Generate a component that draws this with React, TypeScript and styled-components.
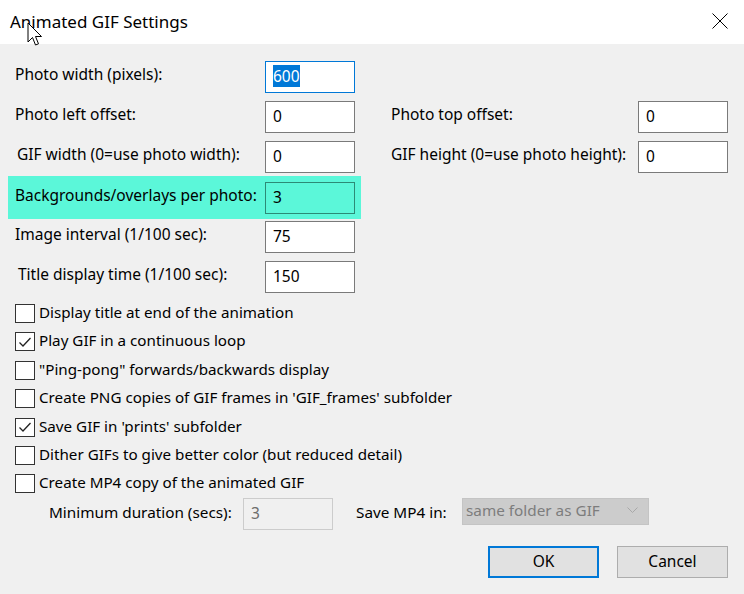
import React from 'react'
import styled, { createGlobalStyle, css } from 'styled-components'

const GlobalStyle = createGlobalStyle`
  html, body {
    margin: 0;
    padding: 0;
    background: #f0f0f0;
  }
  body {
    font-family: 'Noto Sans', 'Open Sans', sans-serif;
    color: #000;
  }
`

const Dialog = styled.div`
  position: relative;
  width: 744px;
  height: 594px;
  display: flex;
  flex-direction: column;
  background: #f0f0f0;
  overflow: hidden;
`

const TitleBar = styled.div`
  height: 44px;
  flex: none;
  background: #fff;
  display: flex;
  align-items: center;
  justify-content: space-between;
  padding: 0 16px 2px 10px;
  box-sizing: border-box;
`

const Title = styled.div`
  font-size: 17px;
`

const CloseBtn = styled.div`
  width: 16px;
  height: 16px;
  display: flex;
`

const Body = styled.div`
  flex: 1;
  display: flex;
  flex-direction: column;
  padding: 13px 16px 0 15px;
`

const FieldRow = styled.div`
  height: 40px;
  display: flex;
  align-items: center;
  gap: 36px;
`

const Pair = styled.div<{ $hl?: boolean }>`
  display: flex;
  align-items: center;
  ${p =>
    p.$hl &&
    css`
      height: 43px;
      margin: 1px -6px 0 -7px;
      padding: 0 6px 0 7px;
      background: #5bf7d9;
    `}
`

const Label = styled.div<{ $w: number; $indent?: number }>`
  width: ${p => p.$w}px;
  padding-left: ${p => p.$indent || 0}px;
  padding-bottom: 6px;
  box-sizing: border-box;
  font-size: 15.5px;
  white-space: nowrap;
`

const TextBox = styled.div<{ $focus?: boolean; $hl?: boolean; $disabled?: boolean }>`
  width: 90px;
  height: 32px;
  box-sizing: border-box;
  border: 1px solid #7a7a7a;
  background: #fff;
  padding: 3px 0 0 7px;
  font-size: 15.5px;
  ${p =>
    p.$focus &&
    css`
      border-color: #0078d7;
    `}
  ${p =>
    p.$hl &&
    css`
      border-color: #2c8a76;
      background: #5bf7d9;
    `}
  ${p =>
    p.$disabled &&
    css`
      border-color: #cccccc;
      background: #f0f0f0;
      color: #6d6d6d;
    `}
`

const Selected = styled.span`
  background: #0078d7;
  color: #fff;
`

const CheckList = styled.div`
  margin-top: 7px;
  display: flex;
  flex-direction: column;
`

const CheckRow = styled.div`
  height: 28.4px;
  display: flex;
  align-items: flex-start;
  gap: 4px;
  font-size: 15.2px;
`

const Box = styled.div`
  width: 20px;
  height: 19px;
  box-sizing: border-box;
  border: 1px solid #333;
  background: #fff;
  display: flex;
  align-items: center;
  justify-content: center;
`

const CheckText = styled.span`
  line-height: 19px;
  margin-top: -1px;
`

const SubRow = styled.div`
  margin-top: -5px;
  padding-left: 34px;
  display: flex;
  align-items: center;
  height: 32px;
  font-size: 15.3px;
`

const SubLabel = styled.span<{ $w: number; $gap?: number }>`
  width: ${p => p.$w}px;
  margin-left: ${p => p.$gap || 0}px;
  padding-bottom: 4px;
`

const Select = styled.div`
  width: 187px;
  height: 27px;
  box-sizing: border-box;
  margin-top: -5px;
  background: #cccccc;
  border: 1px solid #c4c4c4;
  color: #7d7d7d;
  display: flex;
  align-items: center;
  justify-content: space-between;
  padding: 0 10px 2px 3px;
  font-size: 15.3px;
`

const Buttons = styled.div`
  margin-top: 16px;
  display: flex;
  justify-content: flex-end;
  gap: 18px;
`

const Button = styled.div<{ $default?: boolean }>`
  width: 111px;
  height: 32px;
  box-sizing: border-box;
  background: #e1e1e1;
  border: 1px solid #adadad;
  display: flex;
  align-items: center;
  justify-content: center;
  font-size: 15.5px;
  padding-bottom: 2px;
  ${p =>
    p.$default &&
    css`
      border: 2px solid #0078d7;
    `}
`

const Cursor = styled.svg`
  position: absolute;
  left: 27px;
  top: 22px;
`

const checks = [
  { text: 'Display title at end of the animation', on: false },
  { text: 'Play GIF in a continuous loop', on: true },
  { text: '"Ping-pong" forwards/backwards display', on: false },
  { text: "Create PNG copies of GIF frames in 'GIF_frames' subfolder", on: false },
  { text: "Save GIF in 'prints' subfolder", on: true },
  { text: 'Dither GIFs to give better color (but reduced detail)', on: false },
  { text: 'Create MP4 copy of the animated GIF', on: false },
]

const Tick = () => (
  <svg width="14" height="12" viewBox="0 0 14 12">
    <path d="M1.5 6.5 L5 10 L12.5 2" fill="none" stroke="#222" strokeWidth="1.3" />
  </svg>
)

const App = () => {
  return (
    <Dialog>
      <GlobalStyle />
      <TitleBar>
        <Title>Animated GIF Settings</Title>
        <CloseBtn>
          <svg width="16" height="16" viewBox="0 0 16 16">
            <path d="M0.5 0.5 L15.5 15.5 M15.5 0.5 L0.5 15.5" stroke="#000" strokeWidth="1" />
          </svg>
        </CloseBtn>
      </TitleBar>
      <Body>
        <FieldRow>
          <Pair>
            <Label $w={250}>Photo width (pixels):</Label>
            <TextBox $focus>
              <Selected>600</Selected>
            </TextBox>
          </Pair>
        </FieldRow>
        <FieldRow>
          <Pair>
            <Label $w={250}>Photo left offset:</Label>
            <TextBox>0</TextBox>
          </Pair>
          <Pair>
            <Label $w={247}>Photo top offset:</Label>
            <TextBox>0</TextBox>
          </Pair>
        </FieldRow>
        <FieldRow>
          <Pair>
            <Label $w={250} $indent={2}>GIF width (0=use photo width):</Label>
            <TextBox>0</TextBox>
          </Pair>
          <Pair>
            <Label $w={247}>GIF height (0=use photo height):</Label>
            <TextBox>0</TextBox>
          </Pair>
        </FieldRow>
        <FieldRow>
          <Pair $hl>
            <Label $w={250}>Backgrounds/overlays per photo:</Label>
            <TextBox $hl>3</TextBox>
          </Pair>
        </FieldRow>
        <FieldRow>
          <Pair>
            <Label $w={250}>Image interval (1/100 sec):</Label>
            <TextBox>75</TextBox>
          </Pair>
        </FieldRow>
        <FieldRow>
          <Pair>
            <Label $w={250} $indent={3}>Title display time (1/100 sec):</Label>
            <TextBox>150</TextBox>
          </Pair>
        </FieldRow>

        <CheckList>
          {checks.map(c => (
            <CheckRow key={c.text}>
              <Box>{c.on && <Tick />}</Box>
              <CheckText>{c.text}</CheckText>
            </CheckRow>
          ))}
        </CheckList>

        <SubRow>
          <SubLabel $w={194}>Minimum duration (secs):</SubLabel>
          <TextBox $disabled>3</TextBox>
          <SubLabel $w={106} $gap={23}>
            Save MP4 in:
          </SubLabel>
          <Select>
            <span>same folder as GIF</span>
            <svg width="11" height="6" viewBox="0 0 11 6">
              <path d="M0.5 0.5 L5.5 5.5 L10.5 0.5" fill="none" stroke="#a8a8a8" strokeWidth="1" />
            </svg>
          </Select>
        </SubRow>

        <Buttons>
          <Button $default>OK</Button>
          <Button>Cancel</Button>
        </Buttons>
      </Body>

      <Cursor width="16" height="26" viewBox="0 0 16 26">
        <path
          d="M1 1 L1 20 L5.5 15.5 L8.5 23 L11.5 21.8 L8.5 14.5 L14.5 14.5 Z"
          fill="#fff"
          stroke="#000"
          strokeWidth="1"
          strokeLinejoin="round"
        />
      </Cursor>
    </Dialog>
  )
}

export default App
